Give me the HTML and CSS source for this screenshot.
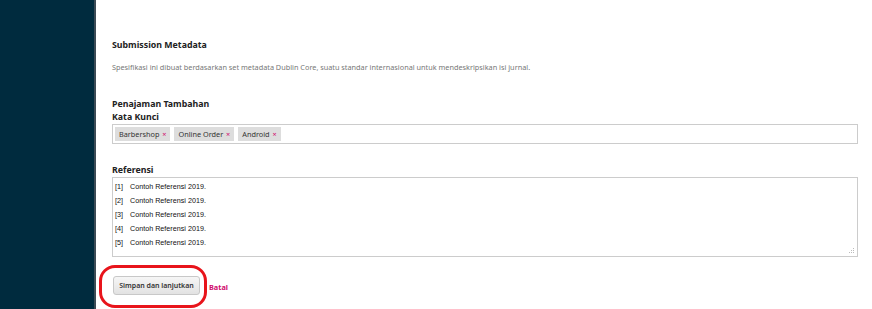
FILE: index.html
```html
<!DOCTYPE html>
<html lang="id">
<head>
    <meta charset="UTF-8">
    <title>Submission Metadata</title>
    <link rel="stylesheet" href="styles.css">
</head>
<body>
    <div class="sidebar"></div>
    <div class="main">
        <h2 class="section-title">Submission Metadata</h2>
        <p class="section-desc">Spesifikasi ini dibuat berdasarkan set metadata Dublin Core, suatu standar internasional untuk mendeskripsikan isi jurnal.</p>

        <div class="group">
            <div class="group-title">Penajaman Tambahan</div>
            <label class="field-label">Kata Kunci</label>
            <div class="tag-input">
                <span class="tag">Barbershop <span class="tag-x">×</span></span>
                <span class="tag">Online Order <span class="tag-x">×</span></span>
                <span class="tag">Android <span class="tag-x">×</span></span>
            </div>
        </div>

        <div class="group refs">
            <label class="field-label">Referensi</label>
            <div class="ref-box">
                <div class="ref-line"><span class="ref-num">[1]</span>Contoh Referensi 2019.</div>
                <div class="ref-line"><span class="ref-num">[2]</span>Contoh Referensi 2019.</div>
                <div class="ref-line"><span class="ref-num">[3]</span>Contoh Referensi 2019.</div>
                <div class="ref-line"><span class="ref-num">[4]</span>Contoh Referensi 2019.</div>
                <div class="ref-line"><span class="ref-num">[5]</span>Contoh Referensi 2019.</div>
                <svg class="grip" width="6" height="6" viewBox="0 0 6 6">
                    <rect x="4" y="0" width="1" height="1" fill="#bbb"/>
                    <rect x="2" y="2" width="1" height="1" fill="#bbb"/>
                    <rect x="4" y="2" width="1" height="1" fill="#bbb"/>
                    <rect x="0" y="4" width="1" height="1" fill="#bbb"/>
                    <rect x="2" y="4" width="1" height="1" fill="#bbb"/>
                    <rect x="4" y="4" width="1" height="1" fill="#bbb"/>
                </svg>
            </div>
        </div>

        <div class="actions">
            <div class="highlight">
                <button class="btn-save">Simpan dan lanjutkan</button>
            </div>
            <a class="btn-cancel" href="#">Batal</a>
        </div>
    </div>
</body>
</html>
```

FILE: styles.css
```css
* {
    box-sizing: border-box;
}
body {
    margin: 0;
    display: flex;
    min-height: 309px;
    font-family: "Noto Sans", sans-serif;
    background: #fff;
}
.sidebar {
    width: 96px;
    flex-shrink: 0;
    background-color: #002b3e;
    border-right: 2px solid #3c4b55;
}
.main {
    flex: 1;
    padding: 38px 14px 0 16px;
}
.section-title {
    margin: 0;
    font-size: 8.8px;
    font-weight: bold;
    color: #222;
    line-height: 14px;
}
.section-desc {
    margin: 9px 0 0;
    font-size: 7.3px;
    color: #777;
    line-height: 12px;
}
.group {
    margin-top: 25px;
}
.group-title, .field-label {
    display: block;
    font-size: 8.8px;
    font-weight: bold;
    color: #222;
    line-height: 13px;
}
.tag-input {
    margin-top: 0;
    height: 20px;
    border: 1px solid #ccc;
    display: flex;
    align-items: center;
    gap: 4px;
    padding: 0 2px;
}
.tag {
    background-color: #ddd;
    font-size: 7.3px;
    color: #333;
    padding: 2px 4px;
    line-height: 10px;
}
.tag-x {
    color: #d00a6c;
    margin-left: 1px;
}
.refs {
    margin-top: 20px;
}
.ref-box {
    position: relative;
    height: 80px;
    border: 1px solid #ccc;
    padding: 2px 2px;
    font-family: "Liberation Sans", Arial, sans-serif;
    font-size: 7.2px;
    color: #111;
}
.ref-line {
    line-height: 14px;
}
.ref-num {
    display: inline-block;
    width: 15px;
    color: #111;
}
.grip {
    position: absolute;
    right: 2px;
    bottom: 2px;
}
.actions {
    display: flex;
    align-items: center;
    margin-top: 8px;
    margin-left: -13px;
}
.highlight {
    border: 3px solid #e8141b;
    border-radius: 16px;
    padding: 8px 4px 10px 11px;
}
.btn-save {
    display: block;
    width: 87px;
    height: 19px;
    background: linear-gradient(#f6f6f6, #e2e2e2);
    border: 1px solid #c8c8c8;
    border-radius: 3px;
    font-family: "Noto Sans", sans-serif;
    font-size: 7px;
    font-weight: 600;
    color: #333;
    padding: 0;
}
.btn-cancel {
    margin-left: 2px;
    font-size: 7.3px;
    font-weight: bold;
    color: #d00a6c;
    text-decoration: none;
}
```
